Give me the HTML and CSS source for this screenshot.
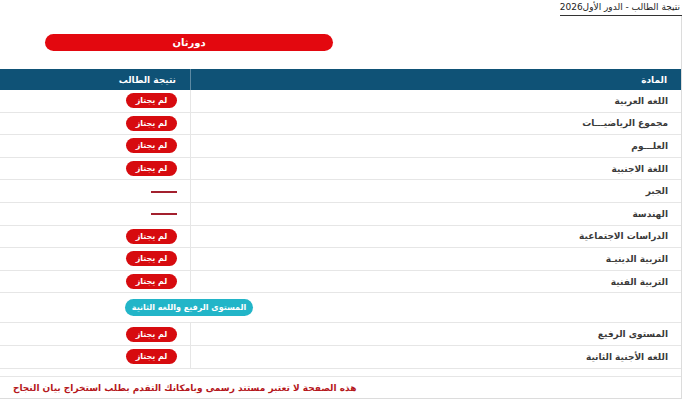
FILE: index.html
```html
<!DOCTYPE html><html lang="ar">
<head>
  <meta charset="UTF-8" />
  <meta name="viewport" content="width=device-width, initial-scale=1.0"/>
  <title>نتيجة الطالب</title>
  <link rel="stylesheet" href="styles.css">
</head>
<body><div class="wrap" dir="rtl">
  <div class="page-title"><span>نتيجة الطالب - الدور الأول2026</span></div>
  <div class="panel">
    <div class="round-bar">دورثان</div>
    <table class="results">
      <thead>
        <tr><th class="subj">المادة</th><th class="res">نتيجة الطالب</th></tr>
      </thead>
      <tbody>
        <tr><td class="subj">اللغه العربية</td><td class="res"><span class="fail">لم يجتاز</span></td></tr>
        <tr><td class="subj">مجموع الرياضيـــات</td><td class="res"><span class="fail">لم يجتاز</span></td></tr>
        <tr><td class="subj">العلـــوم</td><td class="res"><span class="fail">لم يجتاز</span></td></tr>
        <tr><td class="subj">اللغة الاجنبية</td><td class="res"><span class="fail">لم يجتاز</span></td></tr>
        <tr><td class="subj">الجبر</td><td class="res"><span class="dash"></span></td></tr>
        <tr><td class="subj">الهندسة</td><td class="res"><span class="dash"></span></td></tr>
        <tr><td class="subj">الدراسات الاجتماعية</td><td class="res"><span class="fail">لم يجتاز</span></td></tr>
        <tr><td class="subj">التربية الدينيـة</td><td class="res"><span class="fail">لم يجتاز</span></td></tr>
        <tr><td class="subj">التربية الفنية</td><td class="res"><span class="fail">لم يجتاز</span></td></tr>
        <tr class="group"><td colspan="2"><span class="group-tag">المستوى الرفيع واللغه الثانية</span></td></tr>
        <tr><td class="subj">المستوى الرفيع</td><td class="res"><span class="fail">لم يجتاز</span></td></tr>
        <tr><td class="subj">اللغه الأجنية الثانية</td><td class="res"><span class="fail">لم يجتاز</span></td></tr>
      </tbody>
    </table>
    <div class="note">هذه الصفحة لا تعتبر مستند رسمى وبامكانك التقدم بطلب استخراج بيان النجاح</div>
  </div>
</div></body>
</html>
```
FILE: styles.css
```css
body {
  margin: 0;
  background-color: white;
  font-family: "DejaVu Sans", sans-serif;
  color: #333;
}

.wrap {
  width: 682px;
}

.page-title {
  display: flex;
  height: 16px;
}

.page-title span {
  font-size: 9px;
  line-height: 13px;
  padding: 1px 2px 0 0;
  border-bottom: 1px solid #333;
  color: #222;
}

.panel {
  border-right: 1px solid #dcdcdc;
  border-bottom: 1px solid #dcdcdc;
  padding-top: 18px;
}

.round-bar {
  width: 288px;
  height: 17px;
  margin-right: 348px;
  border-radius: 9px;
  background-color: #e3080f;
  color: white;
  font-size: 10px;
  font-weight: bold;
  line-height: 17px;
  text-align: center;
}

.results {
  width: 681px;
  margin-top: 18px;
  border-collapse: collapse;
  font-size: 9px;
}

.results th {
  height: 21px;
  padding: 0 14px;
  background-color: #0f5276;
  color: white;
  font-weight: bold;
  text-align: right;
}

.results td {
  height: 21.6px;
  padding: 0 13px;
  border-bottom: 1px solid #e6e6e6;
  font-weight: bold;
  text-align: right;
}

.results .res {
  width: 162px;
}

.results th.subj {
  border-left: 1px solid #5d8aa3;
}

.results td.subj {
  border-left: 1px solid #e6e6e6;
  color: #3a3a3a;
}

.fail {
  display: inline-block;
  width: 51px;
  height: 15px;
  border-radius: 8px;
  background-color: #d70b0f;
  color: white;
  font-size: 8px;
  line-height: 15px;
  text-align: center;
  vertical-align: middle;
}

.dash {
  display: inline-block;
  width: 26px;
  height: 2px;
  background-color: #a3202e;
  vertical-align: middle;
}

.results tr.group td {
  height: 29px;
  padding: 0 0 0 125px;
  text-align: left;
}

.group-tag {
  display: inline-block;
  width: 128px;
  height: 17px;
  border-radius: 9px;
  background-color: #22b5c8;
  color: white;
  font-size: 8px;
  line-height: 17px;
  text-align: center;
  vertical-align: middle;
}

.note {
  height: 21px;
  margin-top: 7px;
  border-top: 1px solid #e6e6e6;
  padding: 0 13px;
  color: #b5171c;
  font-size: 9px;
  font-weight: bold;
  line-height: 23px;
  text-align: left;
}
```
